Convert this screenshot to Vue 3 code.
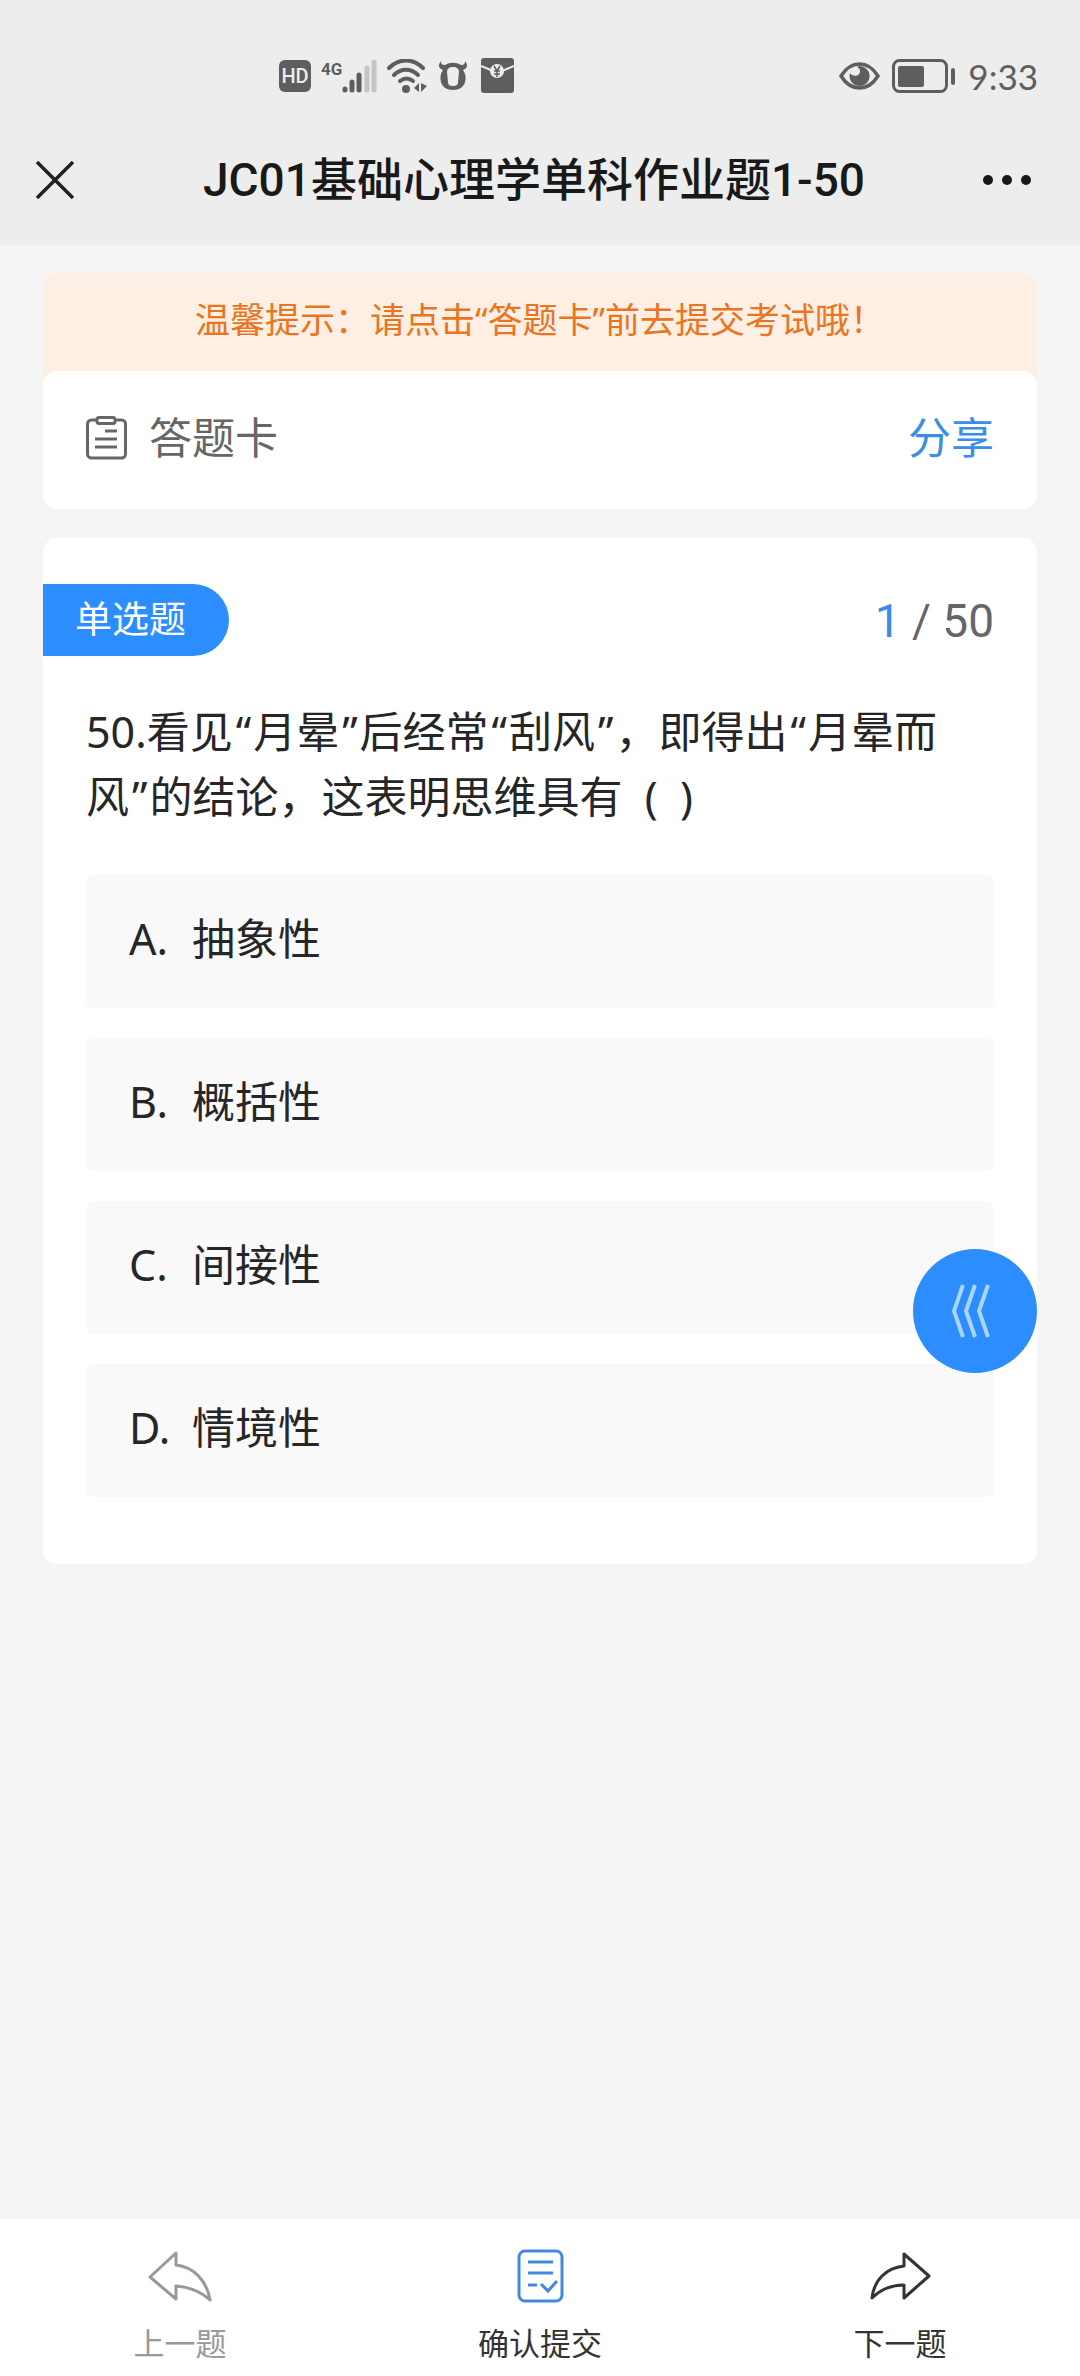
<script setup>
import { ref } from 'vue'

const question = '50.看见“月晕”后经常“刮风”，即得出“月晕而风”的结论，这表明思维具有  (  )'
// Quotation marks get a little air on both sides.
const parts = question.split(/([“”])/).filter(Boolean)
const isQuote = (s) => s === '“' || s === '”'

const options = [
  { key: 'A', text: '抽象性' },
  { key: 'B', text: '概括性' },
  { key: 'C', text: '间接性' },
  { key: 'D', text: '情境性' },
]
const answer = ref('')
</script>

<template>
  <div class="page" lang="zh-CN">
    <header class="top">
      <div class="status">
        <div class="status-left">
          <span class="hd">HD</span>
          <div class="signal">
            <span class="net">4G</span>
            <svg width="35" height="34" viewBox="0 0 35 34">
              <g stroke-width="5" stroke-linecap="round" stroke="#5e5e5e">
                <path d="M3 30v1M10 23v8M17 16v15" />
                <path d="M25 9v22M32 3v28" stroke="#c4c4c4" />
              </g>
            </svg>
          </div>
          <svg width="41" height="34" viewBox="0 0 41 34">
            <g fill="none" stroke="#5e5e5e" stroke-width="4" stroke-linecap="round">
              <path d="M2 9C12-1 26-1 36 9" />
              <path d="M7 16C14 9 24 9 31 16" />
              <path d="M13 22C17 19 22 19 26 22" />
            </g>
            <circle cx="19" cy="30" r="4" fill="#5e5e5e" />
            <path d="M32 24v9l-5-4zM34 24v9l6-6z" fill="#5e5e5e" />
          </svg>
          <svg width="30" height="32" viewBox="0 0 30 32">
            <path fill="#5e5e5e" fill-rule="evenodd" d="M3 1c0 3 1 4 4 4 5-3 11-3 16 0 3 0 4-1 4-4 3 4 3 7-2 9 3 4 3 8 2 12-1 5-6 8-12 8S4 27 3 22c-1-4-1-8 2-12C0 8 0 5 3 1zM15 7c-4 0-6 2-6 5l1 10c0 3 2 4 5 4s5-1 5-4l1-10c0-3-2-5-6-5z" />
          </svg>
          <svg class="i-pay" width="33" height="35" viewBox="0 0 33 35">
            <rect width="33" height="35" rx="3" fill="#5e5e5e" />
            <path d="M0 8l12 5M33 8l-12 5" stroke="#ededed" stroke-width="2" />
            <circle cx="16" cy="13" r="7" fill="#ededed" />
            <path d="M13 8l3 5 3-5M16 13v6M13 13h6M13 16h6" fill="none" stroke="#5e5e5e" stroke-width="1.5" />
          </svg>
        </div>
        <div class="status-right">
          <svg width="41" height="28" viewBox="0 0 41 28">
            <path d="M2 14C12-2 29-2 39 14 29 30 12 30 2 14z" fill="none" stroke="#5e5e5e" stroke-width="3.5" />
            <path fill="#5e5e5e" d="M20 4a10 10 0 1 1-9 7c2 4 10 4 10-2 0-2-1-3-3-4z" />
          </svg>
          <svg width="64" height="34" viewBox="0 0 64 34">
            <rect x="1.5" y="1.5" width="53" height="31" rx="6" fill="none" stroke="#5e5e5e" stroke-width="3" />
            <rect x="6" y="7" width="26" height="21" rx="2" fill="#5e5e5e" />
            <rect x="59" y="9" width="4" height="17" rx="2" fill="#5e5e5e" />
          </svg>
          <time>9:33</time>
        </div>
      </div>
      <div class="titlebar">
        <button class="icon-btn" type="button" aria-label="关闭">
          <svg width="38" height="38" viewBox="0 0 38 38">
            <path d="M1 1l36 36M37 1L1 37" stroke="#222" stroke-width="3.5" />
          </svg>
        </button>
        <h1>JC01基础心理学单科作业题1-50</h1>
        <button class="icon-btn" type="button" aria-label="更多">
          <svg width="50" height="12" viewBox="0 0 50 12" fill="#191919">
            <circle cx="6" cy="6" r="5" /><circle cx="25" cy="6" r="5" /><circle cx="44" cy="6" r="5" />
          </svg>
        </button>
      </div>
    </header>

    <main>
      <div class="notice">
        <p>温馨提示：请点击“答题卡”前去提交考试哦！</p>
      </div>
      <section class="card sheet">
        <button class="sheet-btn" type="button">
          <svg width="41" height="44" viewBox="0 0 41 44" fill="none" stroke="#666" stroke-width="3">
            <rect x="1.5" y="4" width="38" height="38" rx="4" />
            <rect x="11" y="1.5" width="18" height="6" rx="2" fill="#fff" />
            <path d="M19 15h12M9 23h22M9 31h22" />
          </svg>
          <span>答题卡</span>
        </button>
        <a class="share" href="#">分享</a>
      </section>

      <section class="card question">
        <div class="question-head">
          <span class="tag">单选题</span>
          <span class="count"><b>1</b> / 50</span>
        </div>
        <fieldset>
          <legend><template v-for="(p, i) in parts" :key="i"><span v-if="isQuote(p)" class="quote">{{ p }}</span><template v-else>{{ p }}</template></template></legend>
          <label v-for="o in options" :key="o.key" class="option">
            <input v-model="answer" type="radio" name="answer" :value="o.key" />
            <span class="letter">{{ o.key }}.</span>
            <span>{{ o.text }}</span>
          </label>
        </fieldset>
      </section>
    </main>

    <button class="float" type="button" aria-label="展开">
      <svg width="40" height="54" viewBox="0 0 40 54" fill="none" stroke="#a8d6ff" stroke-width="4">
        <path d="M12 1L3 27l9 26M24 1l-9 26 9 26M37 1l-9 26 9 26" />
      </svg>
    </button>

    <nav class="bottom">
      <button class="prev" type="button">
        <svg width="66" height="54" viewBox="0 0 66 54">
          <path d="M29 4v12C47 18 60 32 63 51 53 42 43 38 29 37v13L3 28z" fill="none" stroke="#999" stroke-width="3" stroke-linejoin="round" />
        </svg>
        <span>上一题</span>
      </button>
      <button type="button">
        <svg width="66" height="54" viewBox="0 0 66 54" fill="none" stroke="#4089dc" stroke-width="3">
          <rect x="12" y="2" width="43" height="50" rx="6" />
          <path d="M21 13h25M21 24h25M21 36h9M34 35l7 7 9-10" />
        </svg>
        <span>确认提交</span>
      </button>
      <button type="button">
        <svg width="66" height="54" viewBox="0 0 66 54">
          <path d="M37 5v12C19 19 7 31 5 49 13 41 23 36 37 36v13L62 27z" fill="none" stroke="#333" stroke-width="3" stroke-linejoin="round" />
        </svg>
        <span>下一题</span>
      </button>
    </nav>
  </div>
</template>

<style>
body {
  margin: 0;
  background: #f5f5f5;
}
</style>

<style scoped>
* {
  box-sizing: border-box;
}
.page {
  min-height: 100vh;
  display: flex;
  flex-direction: column;
  background: #f5f5f5;
  color: #262626;
  font-family: "Noto Sans", "Noto Sans CJK SC", sans-serif;
  font-size: 43px;
}
button {
  border: 0;
  padding: 0;
  background: none;
  color: inherit;
  font: inherit;
  cursor: pointer;
}
svg {
  display: block;
  flex: none;
}
.top {
  height: 245px;
  background: #ededed;
  font-family: Roboto, "Noto Sans CJK SC", sans-serif;
}
.status {
  display: flex;
  justify-content: space-between;
  align-items: center;
  height: 115px;
  padding: 36px 42px 0 279px;
  color: #5e5e5e;
}
.status-left,
.status-right {
  display: flex;
  align-items: center;
}
.status-left {
  gap: 10px;
}
.hd {
  width: 32px;
  height: 32px;
  border-radius: 6px;
  background: #5e5e5e;
  color: #ededed;
  font-size: 20px;
  line-height: 33px;
  font-weight: 500;
  text-align: center;
}
.signal {
  display: flex;
  align-items: flex-start;
}
.net {
  width: 21px;
  font-size: 17px;
  line-height: 20px;
  font-weight: 700;
}
.i-pay {
  margin-left: 3px;
}
.status-right {
  gap: 12px;
}
time {
  font-family: Lato, sans-serif;
  font-size: 35px;
  line-height: 38px;
}
.titlebar {
  display: flex;
  align-items: center;
  justify-content: space-between;
  height: 130px;
  padding: 0 48px 0 36px;
}
.icon-btn {
  display: flex;
  align-items: center;
  width: 50px;
  height: 80px;
}
h1 {
  flex: 1;
  margin: 0;
  font-size: 46px;
  line-height: 66px;
  font-weight: 500;
  text-align: center;
  color: #191919;
}
main {
  flex: 1;
  padding: 28px 43px;
}
.notice {
  height: 112px;
  margin-bottom: -14px;
  padding-top: 22px;
  border-radius: 14px 14px 0 0;
  background: #feefe4;
  color: #ea7420;
  font-size: 35px;
  line-height: 50px;
  text-align: center;
}
.notice p {
  margin: 0;
}
.card {
  border-radius: 14px;
  background: #fff;
}
.sheet {
  display: flex;
  align-items: center;
  justify-content: space-between;
  height: 138px;
  padding: 0 43px 4px;
  line-height: 64px;
  position: relative;
}
.sheet-btn {
  display: flex;
  align-items: center;
  gap: 22px;
  color: #666;
}
.share {
  color: #3a8ee6;
  text-decoration: none;
}
.question {
  margin-top: 29px;
  padding: 46px 43px 67px;
}
.question-head {
  display: flex;
  align-items: center;
  justify-content: space-between;
  margin-left: -43px;
}
.tag {
  height: 72px;
  padding: 0 43px 0 32px;
  border-radius: 0 36px 36px 0;
  background: #2c8dff;
  color: #fff;
  font-size: 37px;
  line-height: 70px;
}
.count {
  font-family: Roboto, sans-serif;
  font-size: 46px;
  line-height: 74px;
  height: 72px;
  color: #666;
}
.count b {
  font-weight: 400;
  color: #3a8ee6;
}
fieldset {
  display: flex;
  flex-direction: column;
  gap: 30px;
  min-width: 0;
  margin: 43px 0 0;
  padding: 0;
  border: 0;
}
legend {
  padding: 0 43px 0 0;
  margin-bottom: 46px;
  line-height: 65px;
  white-space: pre-wrap;
}
.quote {
  padding: 0 2px 0 3px;
}
.option {
  display: flex;
  align-items: center;
  height: 133px;
  padding: 0 43px 6px;
  border-radius: 8px;
  background: #f9f9f9;
  line-height: 64px;
}
.option input {
  position: absolute;
  opacity: 0;
}
.letter {
  width: 63px;
}
.float {
  position: fixed;
  top: 1249px;
  right: 43px;
  display: flex;
  align-items: center;
  justify-content: center;
  width: 124px;
  height: 124px;
  padding-right: 8px;
  border-radius: 50%;
  background: #2c8dff;
}
.bottom {
  display: flex;
  height: 157px;
  background: #fff;
  color: #333;
  font-size: 31px;
  line-height: 44px;
}
.bottom button {
  flex: 1;
  display: flex;
  flex-direction: column;
  align-items: center;
  gap: 18px;
  padding-top: 30px;
}
.bottom .prev {
  color: #999;
}
</style>
